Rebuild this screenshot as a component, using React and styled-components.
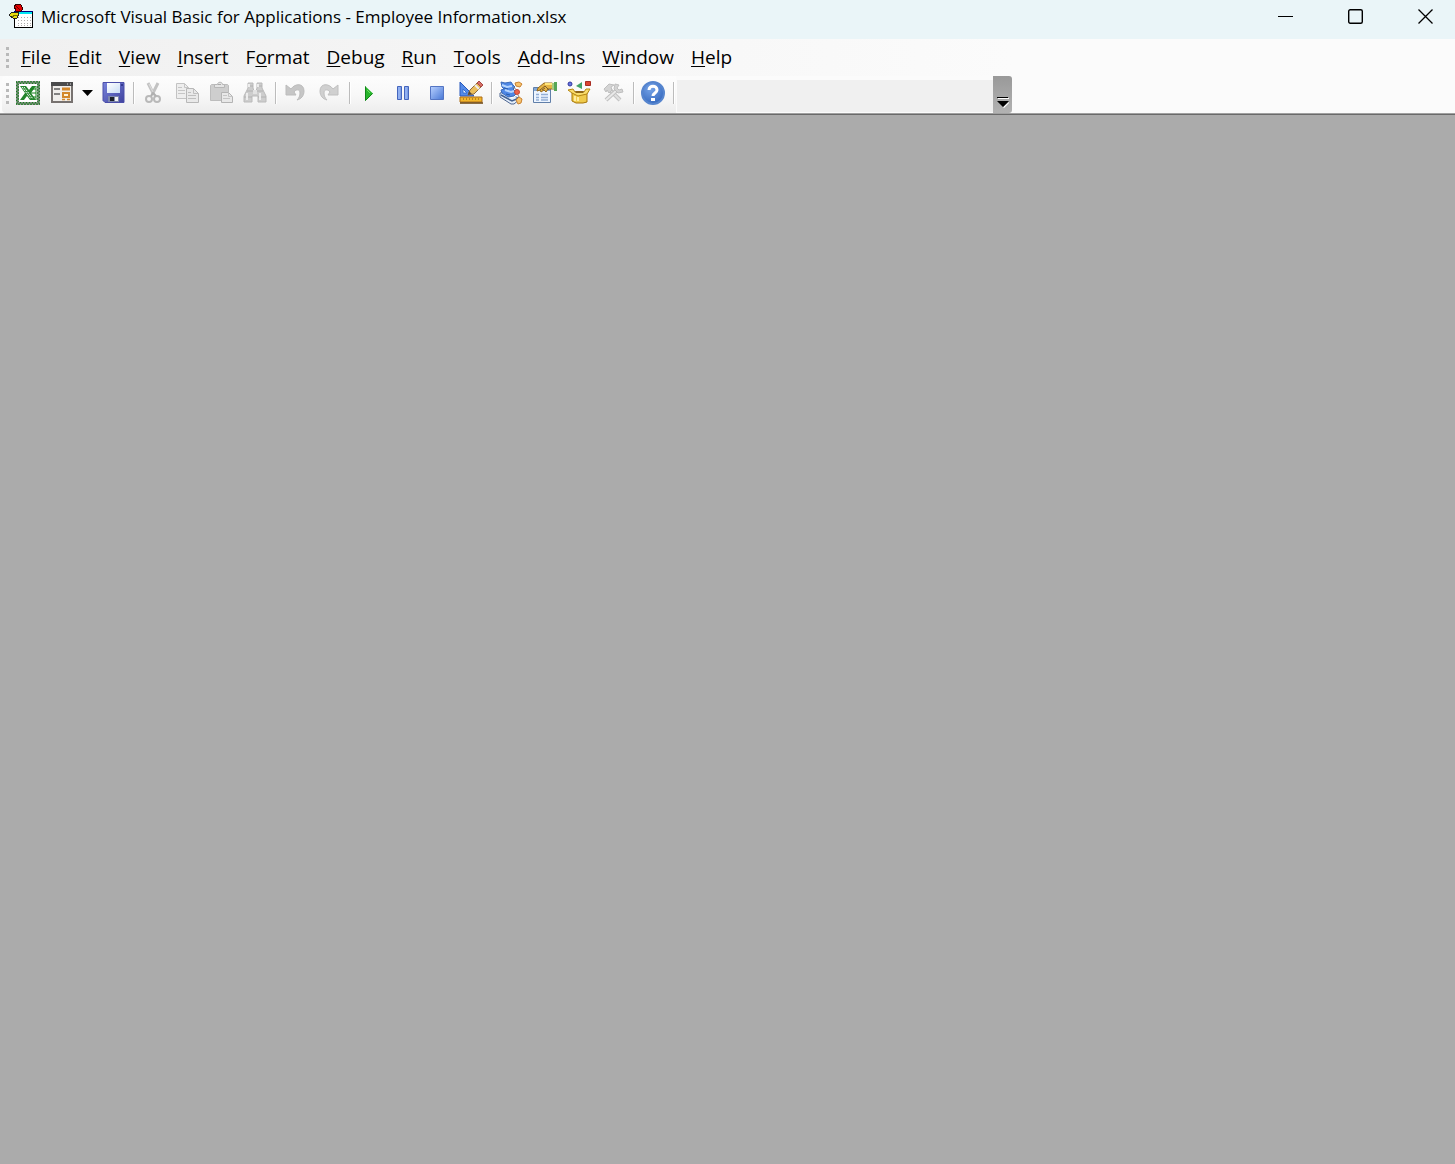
import React from 'react'
import styled, { createGlobalStyle } from 'styled-components'

const GlobalStyle = createGlobalStyle`
  html,
  body,
  #root {
    height: 100%;
    margin: 0;
  }

  button {
    background: none;
    border: 0;
    color: inherit;
    font: inherit;
    margin: 0;
    padding: 0;
  }

  svg {
    display: block;
  }
`

const Window = styled.div`
  background-color: #ababab;
  color: #000;
  display: flex;
  flex-direction: column;
  font-family: 'Open Sans', 'Noto Sans', sans-serif;
  min-height: 100%;
`

const TitleBar = styled.header`
  align-items: center;
  background-color: #eaf5f8;
  box-sizing: border-box;
  display: flex;
  height: 39px;
  padding: 0 21px 6px 9px;
`

const Title = styled.h1`
  flex: 1;
  font-size: 17px;
  font-weight: 400;
  line-height: 24px;
  margin: 0 0 0 8px;
  white-space: nowrap;
`

const WindowControls = styled.div`
  display: flex;
  gap: 54px;
`

const MenuBar = styled.nav`
  align-items: center;
  background: linear-gradient(to right, #f0f0f0, #fbfbfb 1012px);
  display: flex;
  gap: 1px;
  height: 37px;
  padding-left: 6px;
`

const MenuItem = styled.button`
  font-size: 19px;
  line-height: 28px;
  padding: 0 8px 2px;
  white-space: nowrap;

  u {
    text-decoration-skip-ink: none;
    text-decoration-thickness: 1px;
    text-underline-offset: 2px;
  }
`

const ToolbarDock = styled.div`
  background-color: #fbfbfb;
  border-bottom: 1px solid #a0a0a0;
  display: flex;
  padding-left: 2px;
`

const Toolbar = styled.div`
  background: linear-gradient(#fdfdfd, #f8f8f8 50%, #ededed);
  border-radius: 4px 0 0 4px;
  box-sizing: border-box;
  display: flex;
  height: 37px;
  padding: 0 0 3px 4px;
`

const Grip = styled.div`
  align-self: center;
  display: grid;
  gap: 3px;
  margin-right: ${props => props.$gap};

  i {
    background-color: #b9b9b9;
    height: 3px;
    width: 3px;
  }
`

const ToolButton = styled.button`
  display: flex;
  align-items: center;
  justify-content: center;
  width: ${props => (props.$narrow ? '17px' : '34px')};
`

const Separator = styled.div`
  align-self: center;
  background-color: #bcbcbc;
  box-shadow: 1px 0 0 #fff;
  height: 22px;
  margin: 0 2px 0 3px;
  width: 1px;
`

const EmptySlot = styled.div`
  background-color: #f0f0f0;
  margin: 4px 0 1px 1px;
  width: 316px;
`

const OverflowButton = styled.button`
  align-items: flex-end;
  background: linear-gradient(#999, #b2b2b2);
  border-radius: 0 3px 3px 0;
  display: flex;
  justify-content: center;
  padding-bottom: 4px;
  width: 19px;
`

const Workspace = styled.main`
  border-top: 1px solid #6a6a6a;
  flex: 1;
`

const Icon = ({ children, size = 24 }) => (
  <svg width={size} height={size} viewBox={`0 0 ${size} ${size}`} fill="none" aria-hidden="true">
    {children}
  </svg>
)

const AppIcon = () => (
  <svg width="24" height="26" viewBox="0 0 24 26" aria-hidden="true" shapeRendering="crispEdges">
    <path d="M5.5 7.5h18v16h-18z" fill="#fff" stroke="#000" />
    <path d="M6 8h17v2H6z" fill="#00e5f2" />
    <path d="M5 7h19v1H5z" fill="#000080" />
    <path
      d="M9 13.5h1m2 0h1m2 0h1m2 0h1m2 0h1M9 16.5h1m2 0h1m2 0h1m2 0h1m2 0h1M9 19.5h1m2 0h1m2 0h1m2 0h1m2 0h1M9 21.5h1m2 0h1m2 0h1m2 0h1m2 0h1"
      stroke="#aaa"
    />
    <path d="M5 2l3-2 4 1 2 4-3 3-4-1z" fill="#e00000" stroke="#300" />
    <path d="M7 2l4 4" stroke="#700" />
    <path d="M0 11l3-3h6l1 2-2 4H4l-3-2z" fill="#e8dc10" stroke="#222" />
    <path d="M3 13l3-2h3" stroke="#777000" fill="none" />
  </svg>
)

const ExcelIcon = () => (
  <Icon>
    <path d="M1.5 1.5h21v21h-21z" fill="#fff" stroke="#14801a" strokeWidth="3" />
    <path d="M.75.75h22.5v22.5H.75z" stroke="#a394a4" strokeWidth="1.5" strokeDasharray="1.5 1.5" />
    <path d="M2.25 2.25h19.5v19.5H2.25z" stroke="#a394a4" strokeWidth="1.5" strokeDasharray="1.5 1.5" />
    <path d="M4 5h6l3 4 3-4h4l-5 7 5 7h-6l-3-4-3 4H4l5-7z" fill="#23852c" />
    <path d="M6 6l9 12M8 6l9 12" stroke="#fff" strokeDasharray="2 1" />
    <path d="M14 8h6m-5 4h5m-3 4h3" stroke="#16801c" />
    <path d="M20 5v14" stroke="#16801c" />
  </Icon>
)

const FormIcon = () => (
  <Icon>
    <path d="M2 2h20v19H2z" fill="#f0eeeb" stroke="#777270" strokeWidth="2" />
    <path d="M1 1h22v4H1z" fill="#4b4b4c" />
    <path d="M17 3h1m2 0h1" stroke="#ddd" />
    <path d="M4 8h6M4 13h6" stroke="#5d5d5d" strokeWidth="1.5" />
    <path d="M12 8h8" stroke="#d3872b" strokeWidth="3" />
    <path d="M13 12h6v4h-6z" fill="#fff3d7" stroke="#d3872b" strokeWidth="2" />
    <path d="M12 18.5h3m2 0h3" stroke="#d3872b" strokeWidth="1.5" />
  </Icon>
)

const ArrowIcon = () => (
  <Icon size={12}>
    <path d="M0 3h11L5.5 9z" fill="#000" />
  </Icon>
)

const SaveIcon = () => (
  <Icon>
    <defs>
      <linearGradient id="disk" x1="0" y1="0" x2="1" y2="1">
        <stop stopColor="#7984dd" />
        <stop offset="1" stopColor="#3f429e" />
      </linearGradient>
      <linearGradient id="label" x1="0" y1="0" x2="1" y2="1">
        <stop stopColor="#fff" />
        <stop offset="1" stopColor="#c9dcf5" />
      </linearGradient>
    </defs>
    <path d="M2 1.5h21v20H4l-2-2z" fill="url(#disk)" stroke="#4b4ea9" />
    <path d="M6 2h13v10H6z" fill="url(#label)" />
    <path d="M20 3h2v2h-2z" fill="#343a91" />
    <path d="M7 15h11v6H7z" fill="#7c86ad" />
    <path d="M14 16h3v4h-3z" fill="#f2f2f2" />
    <path d="M9 16h4v4H9z" fill="#1c2027" />
  </Icon>
)

const CutIcon = () => (
  <Icon>
    <path d="M7 2l6 12M17 2l-6 12" stroke="#c3c3c3" strokeWidth="3" />
    <path d="M8 3l4 8" stroke="#e0e0e0" />
    <circle cx="8" cy="18" r="3" stroke="#b9b9b9" strokeWidth="2" />
    <circle cx="16" cy="18" r="3" stroke="#b9b9b9" strokeWidth="2" />
    <path d="M10 15l2-3 3 3" stroke="#b0b0b0" strokeWidth="2" />
  </Icon>
)

const CopyIcon = () => (
  <Icon>
    <path d="M1.5 2.5h8l4 4v11h-12z" fill="#eee" stroke="#c3c3c3" />
    <path d="M9.5 2.5v4h4M3 6.5h4M3 9.5h7M3 12.5h7" stroke="#c6c6c6" />
    <path d="M11.5 7.5h7l5 5v9h-12z" fill="#e9e9e9" stroke="#b8b8b8" />
    <path d="M18.5 7.5v5h5M13 11.5h3M13 14.5h8M13 17.5h8" stroke="#bfbfbf" />
  </Icon>
)

const PasteIcon = () => (
  <Icon>
    <path d="M1.5 4.5l1-1h16l1 1v15h-18z" fill="#cecece" stroke="#bdbdbd" />
    <path d="M5.5 6.5h10v-3h-2c0-3-5-3-5 0h-3z" fill="#e5e5e5" stroke="#b6b6b6" />
    <path d="M9 3.5h3" stroke="#aaa" />
    <path d="M12.5 11.5h7l4 4v6h-11z" fill="#e8e8e8" stroke="#b4b4b4" />
    <path d="M19.5 11.5v4h4M14 14.5h4M14 17.5h7" stroke="#c5c5c5" />
  </Icon>
)

const FindIcon = () => (
  <Icon>
    <path d="M5 2h5v5l1 3h2l1-3V2h5v5l4 8v6h-8v-6H9v6H1v-6l4-8z" fill="#cdcdcd" stroke="#bababa" />
    <path d="M5 5h5m4 0h5M4 10h6m4 0h6M1 16h8m6 0h8" stroke="#b2b2b2" />
    <path d="M6 3v3m9-3v3M4 12v7m13-7v7" stroke="#ededed" strokeWidth="2" />
    <path d="M10 9h4v4h-4z" fill="#e2e2e2" />
  </Icon>
)

const UndoIcon = () => (
  <Icon>
    <path d="M8 8c4-6 13-6 13 2 0 5-3 8-7 9 2-2 3-4 3-7 0-4-4-4-6-1l2 3H3V4z" fill="#c6c6c6" stroke="#bcbcbc" />
  </Icon>
)

const RedoIcon = () => (
  <Icon>
    <path d="M16 8C12 2 3 2 3 10c0 5 3 8 7 9-2-2-3-4-3-7 0-4 4-4 6-1l-2 3h10V4z" fill="#d0d0d0" stroke="#c0c0c0" />
  </Icon>
)

const RunIcon = () => (
  <Icon>
    <path d="M8 5l8 7.5L8 20z" fill="#28b52c" />
    <path d="M8.5 5.5v14l7-7" stroke="#12851a" />
    <path d="M10 9l3 3" stroke="#70dd62" />
  </Icon>
)

const PauseIcon = () => (
  <Icon>
    <path d="M6.5 5.5h4v13h-4zM13.5 5.5h4v13h-4z" fill="#7d9fe4" stroke="#4565bd" />
    <path d="M8 6v12m7-12v12" stroke="#a5c1ff" />
  </Icon>
)

const StopIcon = () => (
  <Icon>
    <defs>
      <linearGradient id="stop" x1="0" y1="0" x2="1" y2="1">
        <stop stopColor="#b9d1ff" />
        <stop offset="1" stopColor="#4777d5" />
      </linearGradient>
    </defs>
    <path d="M5.5 5.5h13v13h-13z" fill="url(#stop)" stroke="#5475c3" />
  </Icon>
)

const DesignIcon = () => (
  <Icon>
    <path d="M1 1l14 14H1z" fill="#548be8" stroke="#2859bc" />
    <path d="M4 8v4h4z" fill="#eef6ff" stroke="#376fd1" />
    <path d="M9 14l2-5 9-9 4 4-9 9z" fill="#e9bd5c" stroke="#8f6c41" />
    <path d="M18 2l2-2 4 4-2 2z" fill="#d56e64" stroke="#a74845" />
    <path d="M16 4l4 4" stroke="#eee" strokeWidth="2" />
    <path d="M9 14l1-4 3 3z" fill="#534637" />
    <path d="M1 16h22v5H1z" fill="#f2b62b" stroke="#ad6c17" />
    <path d="M1 22h23" stroke="#68420d" strokeWidth="1.5" />
    <path d="M4.5 17v2m3-2v2m3-2v2m3-2v2m3-2v2m3-2v2" stroke="#b98222" />
  </Icon>
)

const ExplorerIcon = () => (
  <Icon>
    <path d="M1 12l7-1 13 7-6 5h-3L1 16z" fill="#e4eefb" stroke="#4e6690" />
    <path d="M2 14l11 6 7-3" stroke="#42608f" strokeWidth="1.5" />
    <path d="M4 13l9 4 5-2-10-4z" fill="#fff" />
    <path d="M2 1l4 1 6-1 2 3 2 2-2 2 4 4-3 3-6 1-6-4-1-3 3-1-2-2z" fill="#4f88e6" stroke="#3a69b8" />
    <path d="M3 4l5 2 5-1M6 9l6 2 3-1" stroke="#b5d5ff" strokeWidth="2" />
    <path d="M5 7l4 1M7 13l4 1" stroke="#285ba9" />
    <path d="M16 2l4-1 3 2-2 3-4-1zM17 19l3-3 3 2-1 4-3 1z" fill="#f8c36d" stroke="#c98231" />
    <path d="M14 6l4 3m1 5l1 2" stroke="#888" />
    <circle cx="18" cy="11" r="2.5" fill="#ed624b" stroke="#c64a38" />
  </Icon>
)

const PropertiesIcon = () => (
  <Icon>
    <path d="M.5 6.5h17v15H.5z" fill="#edf5ff" stroke="#607fa9" />
    <path d="M1 7h16v3H1z" fill="#83a8d8" />
    <path d="M3 13.5h3m2 0h7M3 16.5h3m2 0h7M3 19h3m2 0h7" stroke="#93afd6" strokeWidth="1.5" />
    <path d="M5 7l6-5h8l3 2v4h-7l-2 3-2-2-3 2-1-2-3 1z" fill="#e5b444" stroke="#946a22" />
    <path d="M7 9l5-4 4 4M9 9l3-2" stroke="#805d26" />
    <path d="M12 3h7" stroke="#ffe57b" strokeWidth="2" />
    <path d="M21 1h3v9h-3z" fill="#56a657" />
    <path d="M19 2h2v6h-2z" fill="#a8cc7e" />
  </Icon>
)

const BrowserIcon = () => (
  <Icon>
    <circle cx="3" cy="3" r="2" fill="#6276df" stroke="#31349e" />
    <path d="M15 1v7L9 5z" fill="#42a367" />
    <path d="M18.5.5h5v4h-5z" fill="#d94531" stroke="#a92d23" />
    <path d="M5 12l7 2 8-2v9l-4 1H9l-4-2z" fill="#efca4b" stroke="#a57508" />
    <path d="M5 12L1 9l5-1 2 3h9l2-3h4l-3 5-9 2z" fill="#f8dc6c" stroke="#b58612" />
    <path d="M8 10h9l-1 2H9z" fill="#8f6617" />
    <path d="M8 15v5m3-4v4" stroke="#ffec9e" strokeWidth="2" />
  </Icon>
)

const ToolboxIcon = () => (
  <Icon>
    <path d="M8 8l11 11" stroke="#c2c2c2" strokeWidth="4" />
    <path d="M8 8l11 11" stroke="#e0e0e0" strokeWidth="2" />
    <path d="M17 8L5 19" stroke="#bfbfbf" strokeWidth="4" />
    <path d="M16 9L5 19" stroke="#e9e9e9" strokeWidth="2" />
    <path d="M3 8l5-5 5 1-3 2 1 3-3 3-2-3-1 2zM14 3l-1 5 4 4 5-1-1-3-3 1-2-2 2-3z" fill="#d4d4d4" stroke="#bfbfbf" />
  </Icon>
)

const HelpIcon = () => (
  <Icon>
    <defs>
      <radialGradient id="help" cx="0.4" cy="0.3" r="0.7">
        <stop stopColor="#76a4e8" />
        <stop offset="1" stopColor="#386bc0" />
      </radialGradient>
    </defs>
    <circle cx="12" cy="12" r="11" fill="url(#help)" stroke="#5685ce" strokeWidth="2" />
    <path d="M8 9c0-5 8-5 8 0 0 3-4 3-4 6" stroke="#fff" strokeWidth="3" />
    <path d="M10 17h4v3h-4z" fill="#fff" />
  </Icon>
)

const OverflowIcon = () => (
  <svg width="14" height="14" viewBox="0 0 14 14" aria-hidden="true">
    <path d="M2 3h11v1H2zM13 7v1l-5 5-1-1z" fill="#fff" />
    <path d="M1 2h11v1H1zM1 6h12l-6 6z" fill="#000" />
  </svg>
)

const menus = [
  ['', 'F', 'ile'],
  ['', 'E', 'dit'],
  ['', 'V', 'iew'],
  ['', 'I', 'nsert'],
  ['F', 'o', 'rmat'],
  ['', 'D', 'ebug'],
  ['', 'R', 'un'],
  ['', 'T', 'ools'],
  ['', 'A', 'dd-Ins'],
  ['', 'W', 'indow'],
  ['', 'H', 'elp']
]

const toolGroups = [
  [
    { name: 'View Microsoft Excel', icon: ExcelIcon },
    { name: 'Insert UserForm', icon: FormIcon },
    { name: 'Insert options', icon: ArrowIcon, narrow: true },
    { name: 'Save', icon: SaveIcon }
  ],
  [
    { name: 'Cut', icon: CutIcon, disabled: true },
    { name: 'Copy', icon: CopyIcon, disabled: true },
    { name: 'Paste', icon: PasteIcon, disabled: true },
    { name: 'Find', icon: FindIcon, disabled: true }
  ],
  [
    { name: 'Undo', icon: UndoIcon, disabled: true },
    { name: 'Redo', icon: RedoIcon, disabled: true }
  ],
  [
    { name: 'Run', icon: RunIcon },
    { name: 'Break', icon: PauseIcon },
    { name: 'Reset', icon: StopIcon },
    { name: 'Design Mode', icon: DesignIcon }
  ],
  [
    { name: 'Project Explorer', icon: ExplorerIcon },
    { name: 'Properties Window', icon: PropertiesIcon },
    { name: 'Object Browser', icon: BrowserIcon },
    { name: 'Toolbox', icon: ToolboxIcon, disabled: true }
  ],
  [{ name: 'Help', icon: HelpIcon }]
]

const GripDots = ({ gap }) => (
  <Grip $gap={gap}>
    <i />
    <i />
    <i />
    <i />
  </Grip>
)

const App = () => {
  return (
    <Window>
      <GlobalStyle />
      <TitleBar>
        <AppIcon />
        <Title>Microsoft Visual Basic for Applications - Employee Information.xlsx</Title>
        <WindowControls>
          <button aria-label="Minimize">
            <Icon size={16}>
              <path d="M0 7.5h15" stroke="#000" />
            </Icon>
          </button>
          <button aria-label="Maximize">
            <Icon size={16}>
              <rect x="0.7" y="0.7" width="13.6" height="13.6" rx="1.5" stroke="#000" strokeWidth="1.4" />
            </Icon>
          </button>
          <button aria-label="Close">
            <Icon size={16}>
              <path d="M0.5 0.5l14 14M14.5 0.5l-14 14" stroke="#000" strokeWidth="1.3" />
            </Icon>
          </button>
        </WindowControls>
      </TitleBar>
      <MenuBar>
        <GripDots gap="3px" />
        {menus.map(([before, key, after]) => (
          <MenuItem key={before + key + after}>
            {before}
            <u>{key}</u>
            {after}
          </MenuItem>
        ))}
      </MenuBar>
      <ToolbarDock>
        <Toolbar>
          <GripDots gap="2px" />
          {toolGroups.map(group => (
            <React.Fragment key={group[0].name}>
              {group.map(({ name, icon: ToolIcon, narrow, disabled }) => (
                <ToolButton key={name} aria-label={name} $narrow={narrow} disabled={disabled}>
                  <ToolIcon />
                </ToolButton>
              ))}
              <Separator />
            </React.Fragment>
          ))}
        </Toolbar>
        <EmptySlot />
        <OverflowButton aria-label="Toolbar options">
          <OverflowIcon />
        </OverflowButton>
      </ToolbarDock>
      <Workspace />
    </Window>
  )
}

export default App
